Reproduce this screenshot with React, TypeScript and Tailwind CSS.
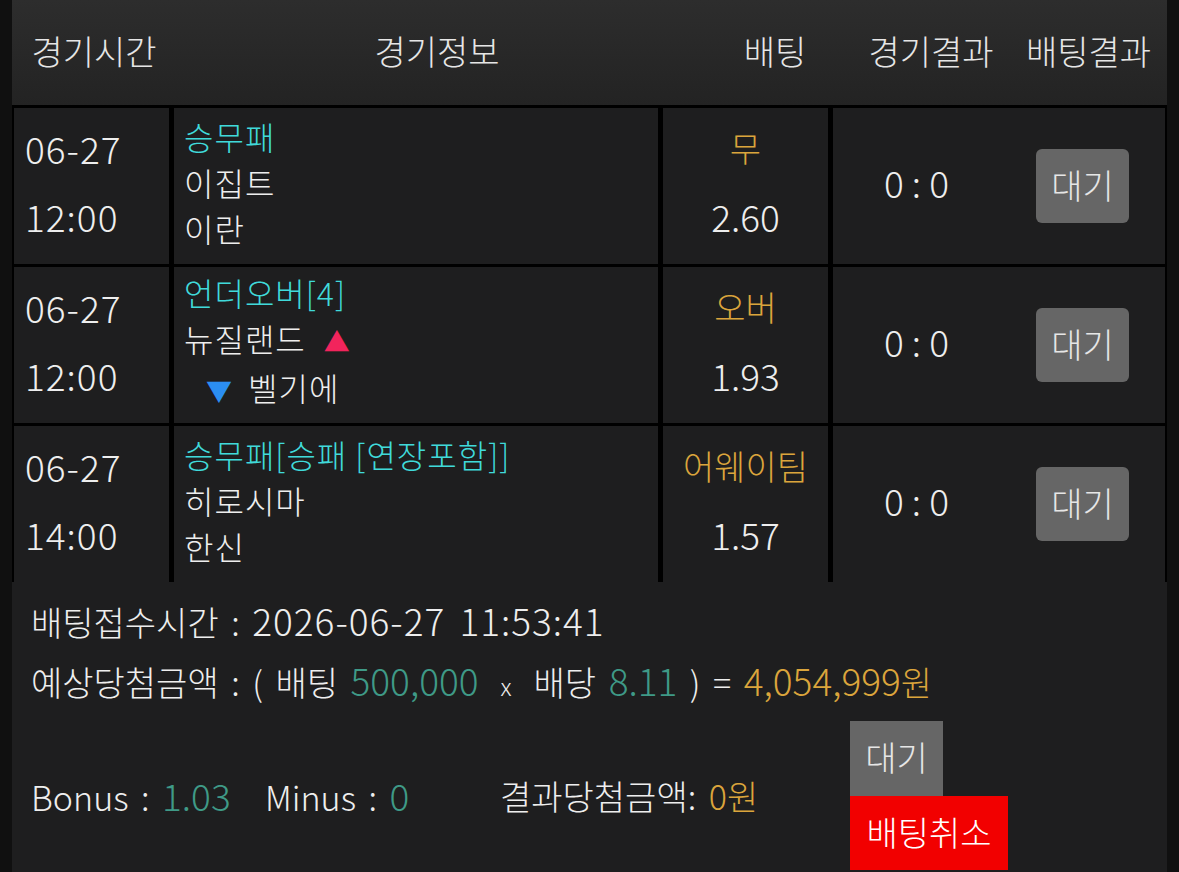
import React from 'react';

interface BetRow {
  date: string;
  time: string;
  market: string;
  home: React.ReactNode;
  away: React.ReactNode;
  pick: string;
  odds: string;
  score: string;
}

const rows: BetRow[] = [
  { date: '06-27', time: '12:00', market: '승무패', home: '이집트', away: '이란', pick: '무', odds: '2.60', score: '0 : 0' },
  {
    date: '06-27',
    time: '12:00',
    market: '언더오버[4]',
    home: (
      <>
        뉴질랜드<span className="ml-[18px] text-[26px] text-[#f2245c]">▲</span>
      </>
    ),
    away: (
      <span className="pl-[22px]">
        <span className="mr-[15px] text-[26px] text-[#2b8ef2]">▼</span>벨기에
      </span>
    ),
    pick: '오버',
    odds: '1.93',
    score: '0 : 0',
  },
  { date: '06-27', time: '14:00', market: '승무패[승패 [연장포함]]', home: '히로시마', away: '한신', pick: '어웨이팀', odds: '1.57', score: '0 : 0' },
];

const App: React.FC = () => {
  return (
    <div className="min-h-screen bg-[#101010] px-[12px] font-['Noto_Sans_CJK_KR','Noto_Sans',sans-serif] text-[34px] font-light text-[#eeeeee]">
      <div className="bg-black">
        {/* Header */}
        <div className="grid h-[105px] grid-cols-[164px_522px_154px_158px_1fr] items-center bg-gradient-to-b from-[#2d2d2d] to-[#232323] pb-[4px] text-[#e6e6e6]">
          <div className="text-center">경기시간</div>
          <div className="text-center">경기정보</div>
          <div className="text-center">배팅</div>
          <div className="text-center">경기결과</div>
          <div className="text-center">배팅결과</div>
        </div>

        {/* Rows */}
        <div className="mt-[3px] flex flex-col gap-[3px] px-[2px]">
          {rows.map((row, i) => (
            <div key={i} className="grid h-[156px] grid-cols-[155px_484px_165px_1fr] gap-x-[5px]">
              <div className="flex flex-col justify-center gap-[14px] bg-[#1e1e1f] pb-[8px] pl-[11px] text-[37px] leading-[54px] tracking-[1px]">
                <div>{row.date}</div>
                <div>{row.time}</div>
              </div>
              <div className="flex flex-col justify-center bg-[#1e1e1f] pb-[8px] pl-[10px] text-[32px] leading-[46px] tracking-[1px]">
                <div className="text-[#40dada]">{row.market}</div>
                <div>{row.home}</div>
                <div>{row.away}</div>
              </div>
              <div className="flex flex-col items-center justify-center gap-[14px] bg-[#1e1e1f] pb-[8px] leading-[54px]">
                <div className="text-[#dba53c]">{row.pick}</div>
                <div className="text-[37px]">{row.odds}</div>
              </div>
              <div className="grid grid-cols-[167px_1fr] items-center bg-[#1e1e1f]">
                <div className="pb-[6px] text-center text-[37px]">{row.score}</div>
                <div className="flex justify-center">
                  <div className="flex h-[74px] w-[93px] items-center justify-center rounded-md bg-[#666666] pb-[4px] text-[#e6e6e6]">
                    대기
                  </div>
                </div>
              </div>
            </div>
          ))}
        </div>

        {/* Summary */}
        <div className="bg-[#1e1e1f] pb-[2px] pl-[19px] pt-[9px] [word-spacing:5px]">
          <div className="leading-[58px]">
            배팅접수시간 : <span className="text-[37px] tracking-[1px]">2026-06-27 11:53:41</span>
          </div>
          <div className="leading-[58px]">
            예상당첨금액 : ( 배팅 <span className="text-[37px] text-[#3f9a87]">500,000</span>
            <span className="mx-[22px] text-[24px]">x</span>배당{' '}
            <span className="text-[37px] text-[#3f9a87]">8.11</span> ) ={' '}
            <span className="text-[#dba53c]">
              <span className="text-[37px]">4,054,999</span>원
            </span>
          </div>
          <div className="mt-[6px] flex items-center">
            <div className="w-[234px]">
              Bonus : <span className="text-[37px] text-[#3f9a87]">1.03</span>
            </div>
            <div className="w-[235px]">
              Minus : <span className="text-[37px] text-[#3f9a87]">0</span>
            </div>
            <div className="w-[350px]">
              결과당첨금액: <span className="text-[#dba53c]">0원</span>
            </div>
            <div className="flex flex-col items-start">
              <div className="flex h-[75px] w-[93px] items-center justify-center bg-[#666666] pb-[4px] text-[#e6e6e6]">대기</div>
              <div className="flex h-[74px] w-[158px] items-center justify-center bg-[#f20000] pb-[4px] text-white">배팅취소</div>
            </div>
          </div>
        </div>
      </div>
    </div>
  );
};

export default App;
